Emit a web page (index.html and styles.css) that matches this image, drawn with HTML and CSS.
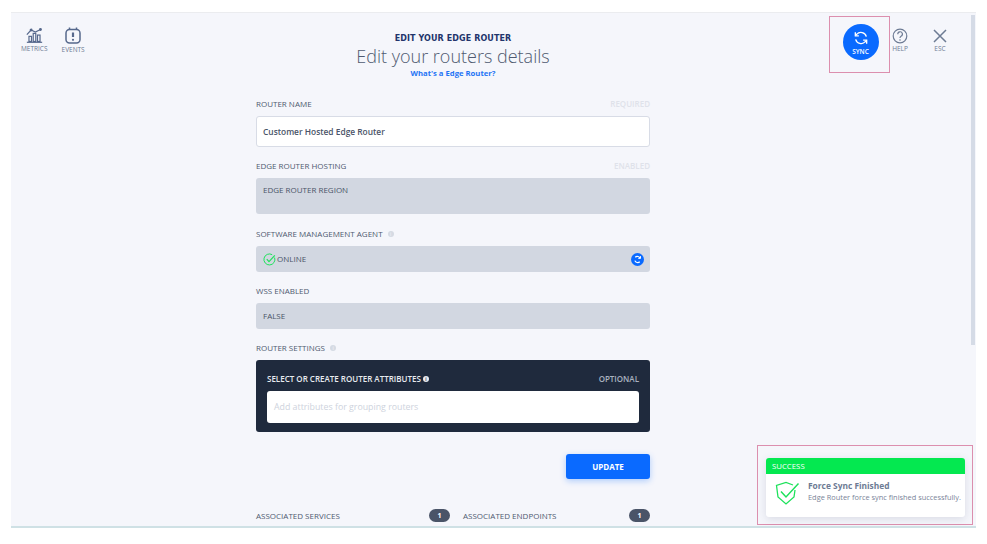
FILE: index.html
```html
<!DOCTYPE html>
<html>
<head>
<meta charset="UTF-8">
<title>Edit Edge Router</title>
<link rel="stylesheet" href="styles.css">
</head>
<body>

<div class="screen">

	<!-- left icons -->
	<div class="navLeft">
		<div class="navItem">
			<svg width="17" height="17" viewBox="0 0 20 18" fill="none" stroke="#56688c" stroke-width="1.4">
				<path d="M1 8 L6 2.5 L11 5 L17 2"/>
				<circle cx="6" cy="2.5" r="1" fill="#56688c"/>
				<circle cx="17" cy="2" r="1" fill="#56688c"/>
				<rect x="3.5" y="10" width="3" height="6"/>
				<rect x="8.5" y="6.5" width="3" height="9.5"/>
				<rect x="13.5" y="8.5" width="3" height="7.5"/>
				<path d="M1 17 H19"/>
			</svg>
			<span>METRICS</span>
		</div>
		<div class="navItem">
			<svg width="18" height="18" viewBox="0 0 18 18" fill="none" stroke="#56688c" stroke-width="1.5">
				<rect x="2" y="2.5" width="14" height="13.5" rx="3.5"/>
				<path d="M5.5 0.5 V3 M12.5 0.5 V3"/>
				<path d="M9 5.5 V10" stroke-width="2.2"/>
				<circle cx="9" cy="12.8" r="1.1" fill="#56688c" stroke="none"/>
			</svg>
			<span>EVENTS</span>
		</div>
	</div>

	<div class="formCol">

		<div class="heading">
			<div class="headSmall">EDIT YOUR EDGE ROUTER</div>
			<div class="headBig">Edit your routers details</div>
			<div class="headLink">What's a Edge Router?</div>
		</div>

		<div class="fieldHead">
			<span class="fieldLabel">ROUTER NAME</span>
			<span class="fieldNote">REQUIRED</span>
		</div>
		<div class="inputBox nameBox">Customer Hosted Edge Router</div>

		<div class="fieldHead">
			<span class="fieldLabel">EDGE ROUTER HOSTING</span>
			<span class="fieldNote">ENABLED</span>
		</div>
		<div class="greyBox regionBox">EDGE ROUTER REGION</div>

		<div class="fieldHead">
			<span class="fieldLabel">SOFTWARE MANAGEMENT AGENT <i class="infoDot">i</i></span>
		</div>
		<div class="greyBox rowBox">
			<svg width="13" height="13" viewBox="0 0 13 13" fill="none" stroke="#1fe25c" stroke-width="1">
				<path d="M11.6 4.6 A5.5 5.5 0 1 1 9.2 1.7"/>
				<path d="M3.8 6.2 L6 8.6 L11.8 2.4" stroke-width="1.2"/>
			</svg>
			<span class="rowText">ONLINE</span>
			<span class="miniSync">
				<svg width="9" height="9" viewBox="0 0 24 24" fill="none" stroke="#fff" stroke-width="3.4">
					<path d="M19 9 A8 8 0 0 0 6 6"/>
					<path d="M5 15 A8 8 0 0 0 18 18"/>
					<path d="M20 3 V9 H14" stroke-width="2.6"/>
				</svg>
			</span>
		</div>

		<div class="fieldHead">
			<span class="fieldLabel">WSS ENABLED</span>
		</div>
		<div class="greyBox wssBox">FALSE</div>

		<div class="fieldHead">
			<span class="fieldLabel">ROUTER SETTINGS <i class="infoDot">i</i></span>
		</div>
		<div class="darkBox">
			<div class="darkHead">
				<span class="darkLabel">SELECT OR CREATE ROUTER ATTRIBUTES <i class="infoDot whiteDot">i</i></span>
				<span class="darkNote">OPTIONAL</span>
			</div>
			<div class="attrInput">Add attributes for grouping routers</div>
		</div>

		<div class="btnRow">
			<span class="updateBtn">UPDATE</span>
		</div>

		<div class="assocRow">
			<div class="assocItem">
				<span class="fieldLabel">ASSOCIATED SERVICES</span>
				<span class="countPill">1</span>
			</div>
			<div class="assocItem">
				<span class="fieldLabel">ASSOCIATED ENDPOINTS</span>
				<span class="countPill">1</span>
			</div>
		</div>
	</div>

	<!-- right icons -->
	<div class="navRight">
		<div class="syncMark">
			<div class="syncBtn">
				<svg width="16" height="16" viewBox="0 0 24 24" fill="none" stroke="#fff" stroke-width="2">
					<path d="M20 10 A8.5 8.5 0 0 0 5.5 6.5 L3.5 8.5"/>
					<path d="M3.5 3.5 V8.8 H8.8"/>
					<path d="M4 14 A8.5 8.5 0 0 0 18.5 17.5 L20.5 15.5"/>
					<path d="M20.5 20.5 V15.2 H15.2"/>
				</svg>
				<span>SYNC</span>
			</div>
		</div>
		<div class="navItem helpItem">
			<svg width="16" height="16" viewBox="0 0 16 16" fill="none" stroke="#6d7b94" stroke-width="1.2">
				<circle cx="8" cy="8" r="6.8"/>
				<path d="M5.8 6.2 A2.3 2.3 0 1 1 9 8.2 C8.2 8.6 8 9 8 10"/>
				<circle cx="8" cy="12" r="0.8" fill="#6d7b94" stroke="none"/>
			</svg>
			<span>HELP</span>
		</div>
		<div class="navItem escItem">
			<svg width="16" height="16" viewBox="0 0 16 16" fill="none" stroke="#6d7b94" stroke-width="1.5">
				<path d="M2 2 L14 14 M14 2 L2 14"/>
			</svg>
			<span>ESC</span>
		</div>
	</div>

	<div class="scrollThumb"></div>

	<!-- toast -->
	<div class="toastMark">
		<div class="toast">
			<div class="toastHead">SUCCESS</div>
			<div class="toastBody">
				<svg class="toastIcon" width="26" height="26" viewBox="0 0 26 26" fill="none" stroke="#1fe25c" stroke-width="1.3">
					<path d="M19 5 L12 2.5 L2.5 5.5 L4 17 L12 24 L20 17 L21 10"/>
					<path d="M7 11.5 L12 17 L24.5 3.5" stroke-width="1.5"/>
				</svg>
				<div>
					<div class="toastTitle">Force Sync Finished</div>
					<div class="toastText">Edge Router force sync finished successfully.</div>
				</div>
			</div>
		</div>
	</div>
</div>

</body>
</html>
```
FILE: styles.css
```css
/* base */
html, body {
	margin: 0;
	padding: 0;
	background: #fff;
}
body {
	font-family: "Open Sans", "Noto Sans", sans-serif;
	color: #4a5468;
}

.screen {
	position: relative;
	box-sizing: border-box;
	display: grid;
	grid-template-columns: 245px 394px 1fr;
	width: 965px;
	height: 516px;
	margin: 12px 0 0 11px;
	overflow: hidden;
	background: #f5f6fb;
	border-top: 1px solid #ebecef;
	border-bottom: 2px solid #cfe1e5;
}

/* side icons */
.navLeft {
	display: flex;
	align-items: flex-start;
	gap: 14px;
	padding: 14px 0 0 10px;
}
.navItem {
	display: flex;
	flex-direction: column;
	align-items: center;
	gap: 1px;
	font-size: 6.5px;
	line-height: 8px;
	color: #6d7b94;
}
.navRight {
	display: flex;
	align-items: flex-start;
	padding: 3px 0 0 179px;
}
.syncMark {
	box-sizing: border-box;
	display: flex;
	justify-content: center;
	width: 61px;
	height: 57px;
	padding: 7px 0 0 2px;
	border: 1px solid #dc8fae;
}
.syncBtn {
	display: flex;
	flex-direction: column;
	align-items: center;
	justify-content: center;
	gap: 2px;
	width: 36px;
	height: 36px;
	border-radius: 50%;
	background: #0a6aff;
	color: #fff;
	font-size: 6.5px;
	font-weight: 600;
	line-height: 7px;
}
.helpItem {
	margin: 12px 0 0 2px;
}
.escItem {
	margin: 12px 0 0 24px;
}
.scrollThumb {
	position: absolute;
	top: 2px;
	left: 960px;
	width: 4px;
	height: 330px;
	background: #d5dbe6;
}

/* form */
.formCol {
	display: flex;
	flex-direction: column;
}
.heading {
	text-align: center;
	padding: 21px 0 19px;
}
.headSmall {
	font-family: "DejaVu Sans", sans-serif;
	font-size: 8px;
	font-weight: 700;
	letter-spacing: 0.1px;
	line-height: 10px;
	color: #22346b;
}
.headBig {
	font-size: 18px;
	font-weight: 300;
	line-height: 25px;
	color: #4f5a70;
}
.headLink {
	font-size: 7.7px;
	font-weight: 700;
	line-height: 9px;
	color: #1f74f5;
}

.fieldHead {
	display: flex;
	justify-content: space-between;
	align-items: center;
	height: 12px;
	margin-bottom: 7px;
}
.fieldLabel {
	font-size: 8px;
	font-weight: 500;
	color: #4f5a70;
}
.fieldNote {
	font-size: 8px;
	font-weight: 600;
	color: #dfe2ea;
}
.infoDot {
	display: inline-block;
	width: 6px;
	height: 6px;
	margin-left: 3px;
	border-radius: 50%;
	background: #d5dae3;
	color: #f5f6fb;
	font-size: 5px;
	font-style: normal;
	line-height: 6px;
	text-align: center;
	vertical-align: 1px;
}
.whiteDot {
	margin-left: 0;
	background: #e8ebf0;
	color: #1f2a3d;
}

.inputBox {
	box-sizing: border-box;
	height: 31px;
	margin-bottom: 12px;
	padding: 0 6px;
	border: 1px solid #d8dce6;
	border-radius: 3px;
	background: #fff;
	font-size: 8.4px;
	font-weight: 600;
	line-height: 29px;
	color: #4a5468;
}
.greyBox {
	box-sizing: border-box;
	margin-bottom: 12px;
	padding: 0 7px;
	border-radius: 3px;
	background: #d2d7e1;
	font-size: 8px;
	color: #4a5468;
}
.regionBox {
	height: 36px;
	padding-top: 6px;
	line-height: 11px;
	margin-bottom: 13px;
}
.rowBox {
	display: flex;
	align-items: center;
	gap: 1px;
	height: 26px;
}
.rowText {
	flex: 1;
	margin-top: -1px;
}
.wssBox {
	height: 26px;
	line-height: 25px;
}
.miniSync {
	display: flex;
	align-items: center;
	justify-content: center;
	width: 13px;
	height: 13px;
	margin-right: -1px;
	border-radius: 50%;
	background: #0a6aff;
}

/* dark settings block */
.darkBox {
	box-sizing: border-box;
	height: 72px;
	padding: 12px 11px 0;
	border-radius: 3px;
	background: #1f2a3d;
}
.darkHead {
	display: flex;
	justify-content: space-between;
	align-items: center;
	height: 12px;
	margin-bottom: 7px;
	font-size: 8px;
	font-weight: 600;
}
.darkLabel {
	color: #e8ebf0;
}
.darkNote {
	color: #aab2c0;
}
.attrInput {
	box-sizing: border-box;
	height: 32px;
	padding: 0 7px;
	border-radius: 3px;
	background: #fff;
	font-size: 8.8px;
	line-height: 32px;
	color: #ced3dd;
}

.btnRow {
	display: flex;
	justify-content: flex-end;
	padding-top: 22px;
}
.updateBtn {
	width: 84px;
	height: 25px;
	border-radius: 3px;
	background: #0a6aff;
	box-shadow: 0 2px 6px rgba(10, 106, 255, 0.3);
	color: #fff;
	font-size: 8px;
	font-weight: 700;
	line-height: 25px;
	text-align: center;
}

.assocRow {
	display: grid;
	grid-template-columns: 194px 187px;
	gap: 13px;
	padding-top: 30px;
}
.assocItem {
	display: flex;
	justify-content: space-between;
	align-items: center;
}
.countPill {
	width: 21px;
	height: 13px;
	border-radius: 7px;
	background: #4a5468;
	color: #fff;
	font-size: 7px;
	font-weight: 700;
	line-height: 13px;
	text-align: center;
}

/* toast */
.toastMark {
	position: absolute;
	left: 746px;
	top: 432px;
	box-sizing: border-box;
	width: 216px;
	height: 80px;
	padding: 12px 7px 0 8px;
	border: 1px solid #dc8fae;
}
.toast {
	height: 59px;
	overflow: hidden;
	border-radius: 3px;
	background: #fff;
	box-shadow: 0 2px 8px rgba(60, 70, 100, 0.15);
}
.toastHead {
	height: 16px;
	padding-left: 6px;
	background: #04e850;
	color: #fff;
	font-size: 7.8px;
	line-height: 16px;
}
.toastBody {
	display: flex;
	align-items: flex-start;
	gap: 8px;
	padding: 6px 0 0 8px;
}
.toastTitle {
	font-size: 8.4px;
	font-weight: 700;
	line-height: 12px;
	color: #6d7b94;
}
.toastText {
	font-size: 7.4px;
	line-height: 10px;
	color: #7a8499;
}
```
